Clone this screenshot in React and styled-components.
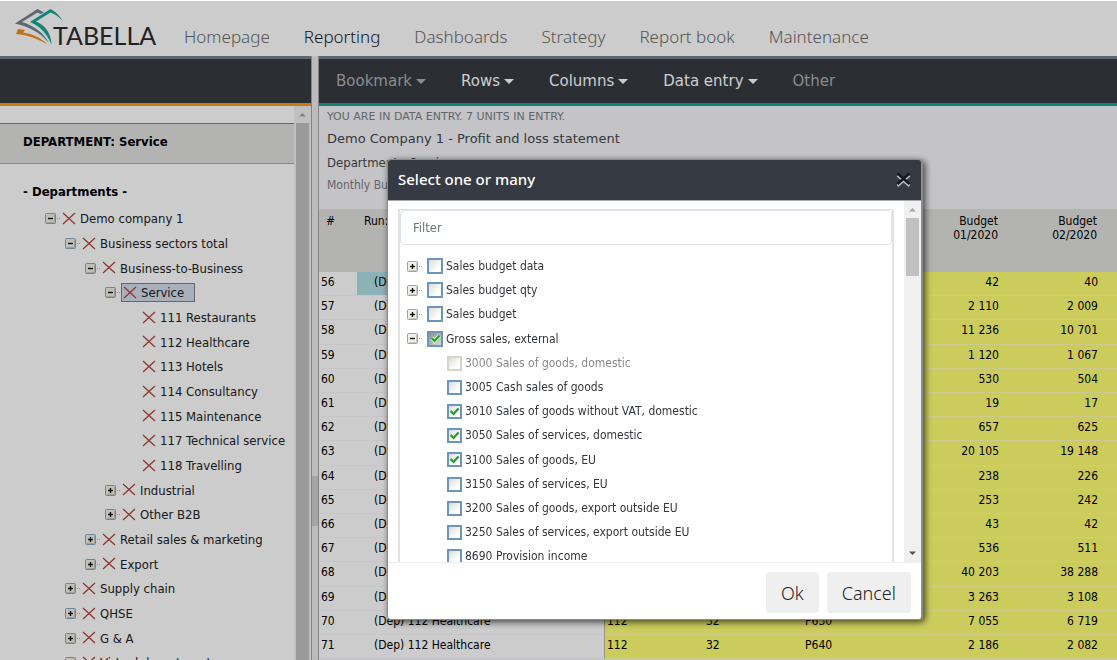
import { useState } from "react";
import styled, { createGlobalStyle } from "styled-components";

const narrow = `"DejaVu Sans Condensed", "Noto Sans", sans-serif`;
const wide = `"DejaVu Sans", sans-serif`;
const noto = `"Noto Sans", sans-serif`;

const navItems = ["Homepage", "Reporting", "Dashboards", "Strategy", "Report book", "Maintenance"];

const menuItems = [
  { name: "Bookmark", caret: true, dim: true },
  { name: "Rows", caret: true },
  { name: "Columns", caret: true },
  { name: "Data entry", caret: true },
  { name: "Other", dim: true },
];

const departments = [
  { name: "Demo company 1", level: 0, open: true },
  { name: "Business sectors total", level: 1, open: true },
  { name: "Business-to-Business", level: 2, open: true },
  { name: "Service", level: 3, open: true, selected: true },
  { name: "111 Restaurants", level: 4, leaf: true },
  { name: "112 Healthcare", level: 4, leaf: true },
  { name: "113 Hotels", level: 4, leaf: true },
  { name: "114 Consultancy", level: 4, leaf: true },
  { name: "115 Maintenance", level: 4, leaf: true },
  { name: "117 Technical service", level: 4, leaf: true },
  { name: "118 Travelling", level: 4, leaf: true },
  { name: "Industrial", level: 3 },
  { name: "Other B2B", level: 3 },
  { name: "Retail sales & marketing", level: 2 },
  { name: "Export", level: 2 },
  { name: "Supply chain", level: 1 },
  { name: "QHSE", level: 1 },
  { name: "G & A", level: 1 },
  { name: "Virtual departments", level: 1 },
];

const budgetRows = [
  [56, "42", "40"],
  [57, "2 110", "2 009"],
  [58, "11 236", "10 701"],
  [59, "1 120", "1 067"],
  [60, "530", "504"],
  [61, "19", "17"],
  [62, "657", "625"],
  [63, "20 105", "19 148"],
  [64, "238", "226"],
  [65, "253", "242"],
  [66, "43", "42"],
  [67, "536", "511"],
  [68, "40 203", "38 288"],
  [69, "3 263", "3 108"],
  [70, "7 055", "6 719", "P630"],
  [71, "2 186", "2 082", "P640"],
];

const accounts = [
  { name: "Sales budget data" },
  { name: "Sales budget qty" },
  { name: "Sales budget" },
  { name: "Gross sales, external", open: true, checked: true },
  { name: "3000 Sales of goods, domestic", child: true, disabled: true },
  { name: "3005 Cash sales of goods", child: true },
  { name: "3010 Sales of goods without VAT, domestic", child: true, checked: true },
  { name: "3050 Sales of services, domestic", child: true, checked: true },
  { name: "3100 Sales of goods, EU", child: true, checked: true },
  { name: "3150 Sales of services, EU", child: true },
  { name: "3200 Sales of goods, export outside EU", child: true },
  { name: "3250 Sales of services, export outside EU", child: true },
  { name: "8690 Provision income", child: true },
];

const Expander = ({ open }) => (
  <ExpandButton type="button" aria-label={open ? "Collapse" : "Expand"}>
    <svg width="17" height="11" viewBox="0 0 17 11">
      <rect x="0.5" y="0.5" width="10" height="10" rx="1" fill="#f1efe9" stroke="#8ba6c2" />
      <path d="M1.5 9.5h8v-8" fill="none" stroke="#c9c6bd" />
      <path d="M3 5.5h5" stroke="#111" strokeWidth="1.4" />
      {!open && <path d="M5.5 3v5" stroke="#111" strokeWidth="1.4" />}
      <path d="M12 5.5h1M14 5.5h1" stroke="#b5b5b5" />
    </svg>
  </ExpandButton>
);

const RedCross = () => (
  <svg width="14" height="14" viewBox="0 0 14 14">
    <path d="M1 1l12 11M13 1L1 12" stroke="#b04038" strokeWidth="1.2" fill="none" />
  </svg>
);

const Scrollbar = ({ thumb, down }) => (
  <Track>
    <svg width="17" height="17" viewBox="0 0 17 17">
      <path d="M5 10.5h7L8.5 7z" fill="#a3a3a3" />
    </svg>
    <Thumb $height={thumb} />
    {down && (
      <svg width="17" height="17" viewBox="0 0 17 17">
        <path d="M5 6.5h7L8.5 10z" fill="#505050" />
      </svg>
    )}
  </Track>
);

const Account = ({ account }) => {
  const [checked, setChecked] = useState(!!account.checked);

  return (
    <AccountRow $child={account.child}>
      {!account.child && <Expander open={account.open} />}
      <AccountLabel $disabled={account.disabled}>
        <Tick $child={account.child}>
          <TickInput
            type="checkbox"
            checked={checked}
            disabled={account.disabled}
            $partial={account.open}
            onChange={(e) => setChecked(e.target.checked)}
          />
          {checked && (
            <svg width="11" height="11" viewBox="0 0 11 11">
              {account.open && <path d="M1.5 5l3 3 5-5.5" fill="none" stroke="#dff3df" strokeWidth="4" />}
              <path d="M1.5 5l3 3 5-5.5" fill="none" stroke="#21a121" strokeWidth="2.2" />
            </svg>
          )}
        </Tick>
        {account.name}
      </AccountLabel>
    </AccountRow>
  );
};

const App = () => {
  const [filter, setFilter] = useState("");

  return (
    <>
      <GlobalStyle />
      <Page>
        <Header>
          <Logo href="#">
            <svg width="50" height="38" viewBox="0 0 50 38">
              <path d="M30 4.5L23.500 1 1 15.500C14 18 27 25 35 35 29 24 20 18 8 14L23.500 4.500l3 1.500z" fill="#76838c" />
              <path d="M4 21l-2 5c12 1 22 5 31 10-6-6-14-10-24-11.500l2-2.500z" fill="#f0901c" />
              <path
                d="M49 13C45 7 41 3 36.500 1L16 14c10 4 17 12 21.500 22.500C37 25 31 17 22 13.500l14.500-9C41 6 45 9 49 13z"
                fill="#14a595"
              />
            </svg>
            <span>TABELLA</span>
          </Logo>
          <Nav>
            {navItems.map((item) => (
              <NavLink href="#" key={item} $active={item === "Reporting"}>
                {item}
              </NavLink>
            ))}
          </Nav>
        </Header>

        <Columns>
          <Sidebar>
            <Bar $line="#fd981a" />
            <SidebarBody>
              <SidebarContent>
                <DepartmentTitle>DEPARTMENT: Service</DepartmentTitle>
                <TreeTitle>- Departments -</TreeTitle>
                <Tree>
                  {departments.map((d) => (
                    <TreeRow key={d.name} $level={d.level} $leaf={d.leaf}>
                      {!d.leaf && <Expander open={d.open} />}
                      <TreeLink href="#" $selected={d.selected}>
                        <RedCross />
                        {d.name}
                      </TreeLink>
                    </TreeRow>
                  ))}
                </Tree>
              </SidebarContent>
              <Scrollbar />
            </SidebarBody>
          </Sidebar>
          <Splitter>
            <Grip />
          </Splitter>

          <Main>
            <Bar $line="#14a595">
              {menuItems.map((m) => (
                <MenuButton type="button" key={m.name} $dim={m.dim}>
                  {m.name}
                  {m.caret && <Caret />}
                </MenuButton>
              ))}
            </Bar>
            <Info>
              <Status>YOU ARE IN DATA ENTRY. 7 UNITS IN ENTRY.</Status>
              <ReportName>Demo Company 1 - Profit and loss statement</ReportName>
              <DepartmentLine>Department - Service</DepartmentLine>
              <BudgetLine>Monthly Budget</BudgetLine>
            </Info>
            <Table>
              <colgroup>
                <col width="38" />
                <col width="248" />
                <col width="99" />
                <col width="99" />
                <col width="99" />
                <col width="99" />
                <col width="99" />
                <col />
              </colgroup>
              <thead>
                <tr>
                  <HeadCell>#</HeadCell>
                  <HeadCell>Run:</HeadCell>
                  <HeadCell />
                  <HeadCell />
                  <HeadCell />
                  <HeadCell $number>Budget<br />01/2020</HeadCell>
                  <HeadCell $number>Budget<br />02/2020</HeadCell>
                  <HeadCell />
                </tr>
              </thead>
              <tbody>
                {budgetRows.map(([no, jan, feb, code], i) => (
                  <Row key={no}>
                    <Cell>{no}</Cell>
                    <NameCell $current={i === 0}>(Dep){code && " 112 Healthcare"}</NameCell>
                    <EntryCell>{code && "112"}</EntryCell>
                    <EntryCell>{code && "32"}</EntryCell>
                    <EntryCell>{code}</EntryCell>
                    <EntryCell $number>{jan}</EntryCell>
                    <EntryCell $number>{feb}</EntryCell>
                    <EntryCell />
                  </Row>
                ))}
              </tbody>
            </Table>
          </Main>
        </Columns>
      </Page>

      <Overlay />
      <Dialog role="dialog" aria-labelledby="dialog-title">
        <DialogHeader>
          <h2 id="dialog-title">Select one or many</h2>
          <CloseButton type="button" aria-label="Close">
            <svg width="15" height="18" viewBox="0 0 15 18">
              <path d="M1.500 5.500l12 10.500M13.500 5.500L1.500 16" stroke="#b9bcc0" strokeWidth="2.500" />
              <path d="M1.500 3.500l12 10.500M13.500 3.500L1.500 14" stroke="#15181c" strokeWidth="2.500" />
            </svg>
          </CloseButton>
        </DialogHeader>
        <DialogBody>
          <ListFrame>
            <FilterInput
              type="text"
              placeholder="Filter"
              aria-label="Filter"
              value={filter}
              onChange={(e) => setFilter(e.target.value)}
            />
            <AccountList>
              {accounts
                .filter((a) => a.name.toLowerCase().includes(filter.toLowerCase()))
                .map((a) => (
                  <Account account={a} key={a.name} />
                ))}
            </AccountList>
          </ListFrame>
          <Scrollbar thumb={58} down />
        </DialogBody>
        <DialogFooter>
          <FooterButton type="button">Ok</FooterButton>
          <FooterButton type="button">Cancel</FooterButton>
        </DialogFooter>
      </Dialog>
    </>
  );
};

const GlobalStyle = createGlobalStyle`
  * {
    box-sizing: border-box;
  }
  body {
    margin: 0;
    overflow: hidden;
    background: #fff;
    font-family: ${narrow};
    font-size: 12px;
  }
  ul, h1, h2, p {
    margin: 0;
    padding: 0;
    list-style: none;
  }
  a {
    color: inherit;
    text-decoration: none;
  }
  button {
    margin: 0;
    padding: 0;
    border: 0;
    background: none;
    color: inherit;
    font: inherit;
    cursor: pointer;
  }
  svg {
    display: block;
    flex: none;
  }
`;

const Page = styled.div`
  display: flex;
  flex-direction: column;
  height: 100vh;
`;

const Header = styled.header`
  display: flex;
  flex: none;
  height: 56px;
  padding-left: 14px;
`;

const Logo = styled.a`
  display: flex;
  width: 170px;
  padding-top: 8px;
  color: #2b2b2b;
  font-family: Lato, sans-serif;
  font-size: 25px;
  line-height: 30px;

  span {
    margin: 12px 0 0 -11px;
  }
`;

const Nav = styled.nav`
  display: flex;
  gap: 34px;
  padding-top: 24px;
  font-family: ${noto};
  font-size: 17px;
  font-weight: 300;
  line-height: 26px;
  white-space: nowrap;
`;

const NavLink = styled.a`
  color: ${(props) => (props.$active ? "#1c2026" : "#6c6c6c")};
`;

const Columns = styled.div`
  display: flex;
  flex: 1;
  min-height: 0;
`;

const Sidebar = styled.aside`
  display: flex;
  flex-direction: column;
  flex: none;
  width: 311px;
`;

const Bar = styled.div`
  display: flex;
  align-items: center;
  flex: none;
  gap: 35px;
  height: 50px;
  padding-left: 17px;
  border-top: 3px solid #76838c;
  border-bottom: 3px solid ${(props) => props.$line};
  background: #363a40;
`;

const SidebarBody = styled.div`
  display: flex;
  flex: 1;
  min-height: 0;
`;

const SidebarContent = styled.div`
  flex: 1;
  padding-top: 17px;
  overflow: hidden;
`;

const DepartmentTitle = styled.h1`
  height: 41px;
  padding-left: 23px;
  border-top: 1px solid #76838c;
  border-bottom: 1px solid #fd981a;
  background: #e0e0de;
  font-family: ${narrow};
  font-size: 13px;
  line-height: 36px;
`;

const TreeTitle = styled.h2`
  padding: 18px 0 4px 23px;
  font-size: 13px;
  line-height: 20px;
`;

const Tree = styled.ul`
  color: #222;
  font-size: 13px;
`;

const TreeRow = styled.li`
  display: flex;
  align-items: center;
  height: 25px;
  padding-left: ${(props) => 45 + props.$level * 20 + (props.$leaf ? 17 : 0)}px;
  white-space: nowrap;

  &:nth-child(3n) {
    height: 24px;
  }
`;

const TreeLink = styled.a`
  display: flex;
  align-items: center;
  gap: 4px;
  height: 19px;
  margin-left: ${(props) => (props.$selected ? -1 : 0)}px;
  padding: 0 10px 0 ${(props) => (props.$selected ? 1 : 0)}px;
  border: ${(props) => (props.$selected ? "1px solid #76838c" : "0")};
  background: ${(props) => (props.$selected ? "#d3dcea" : "none")};
`;

const ExpandButton = styled.button`
  flex: none;
  width: 17px;
`;

const Track = styled.div`
  display: flex;
  flex-direction: column;
  flex: none;
  width: 17px;
  background: #f0f0f0;
`;

const Thumb = styled.div`
  flex: ${(props) => (props.$height ? "none" : 1)};
  height: ${(props) => (props.$height ? props.$height + "px" : "auto")};
  margin: 0 2px ${(props) => (props.$height ? "auto" : "0")};
  background: #c1c1c1;
`;

const Splitter = styled.div`
  display: flex;
  align-items: center;
  flex: none;
  width: 8px;
  border: 1px solid #a5a5a5;
  border-width: 0 1px;
  background: #ebebeb;
`;

const Grip = styled.div`
  width: 6px;
  height: 50px;
  margin-top: 286px;
  background: #cfcfcf;
`;

const Main = styled.main`
  flex: 1;
  min-width: 0;
  background: #f5f6f8;
`;

const MenuButton = styled.button`
  display: flex;
  align-items: center;
  gap: 4px;
  color: ${(props) => (props.$dim ? "#adafb2" : "#fff")};
  font-family: ${wide};
  font-size: 15px;
  white-space: nowrap;
`;

const Caret = styled.span`
  border: 5px solid transparent;
  border-top-color: currentColor;
  border-bottom: 0;
`;

const Info = styled.section`
  height: 103px;
  padding: 2px 0 0 8px;
  color: #43474d;
  white-space: nowrap;
`;

const Status = styled.p`
  color: #7a7f85;
  font-family: ${wide};
  font-size: 11px;
  line-height: 18px;
`;

const ReportName = styled.p`
  font-family: ${wide};
  font-size: 13px;
  line-height: 26px;
`;

const DepartmentLine = styled.p`
  font-size: 13px;
  line-height: 22px;
`;

const BudgetLine = styled.p`
  color: #7a7f85;
  font-size: 12px;
  line-height: 22px;
`;

const Table = styled.table`
  width: 100%;
  table-layout: fixed;
  border-collapse: separate;
  border-spacing: 0;
  background: #fff;
  white-space: nowrap;
`;

const HeadCell = styled.th`
  height: 63px;
  padding: 5px ${(props) => (props.$number ? 3 : 7)}px 0;
  background: #e0e0de;
  font-weight: normal;
  line-height: 14px;
  text-align: ${(props) => (props.$number ? "right" : "left")};
  vertical-align: top;
`;

const Row = styled.tr`
  height: 24px;

  &:nth-child(5n + 3) {
    height: 25px;
  }
`;

const Cell = styled.td`
  padding: 0 2px 4px 2px;
  border-bottom: 1px solid #f8f8f8;
  line-height: 16px;
`;

const NameCell = styled(Cell)`
  padding-left: 17px;
  border-right: 1px solid #b8b8b8;
  background: ${(props) => (props.$current ? "#aee0e4" : "none")};
`;

const EntryCell = styled(Cell)`
  border-bottom-color: #fffcae;
  background: #feff74;
  text-align: ${(props) => (props.$number ? "right" : "left")};
`;

const Overlay = styled.div`
  position: fixed;
  inset: 1px 0 0;
  background: rgba(0, 0, 0, 0.2);
`;

const Dialog = styled.div`
  position: fixed;
  top: 159px;
  left: 387px;
  display: flex;
  flex-direction: column;
  width: 536px;
  height: 461px;
  border: 1px solid #8b8d90;
  border-right-width: 2px;
  border-radius: 4px;
  background: #fff;
  box-shadow: 2px 2px 7px rgba(0, 0, 0, 0.7);
  overflow: hidden;
`;

const DialogHeader = styled.div`
  display: flex;
  align-items: center;
  justify-content: space-between;
  flex: none;
  height: 41px;
  padding: 0 10px 2px;
  border-bottom: 1px solid #a9abae;
  background: #363a42;
  color: #fff;

  h2 {
    font-family: ${noto};
    font-size: 15px;
    font-weight: 500;
  }
`;

const CloseButton = styled.button`
  width: 15px;
`;

const DialogBody = styled.div`
  display: flex;
  flex: 1;
  min-height: 0;
  padding-left: 10px;
  border-bottom: 1px solid #eee;
  overflow: hidden;
`;

const ListFrame = styled.div`
  flex: 1;
  height: 400px;
  margin: 8px 10px 0 0;
  border: 2px solid #e2e2e2;
  border-top-width: 1px;
`;

const FilterInput = styled.input`
  display: block;
  width: 100%;
  height: 35px;
  padding: 0 12px;
  border: 1px solid #dde3e9;
  border-radius: 4px;
  color: #495057;
  font-family: ${narrow};
  font-size: 13px;
  outline: none;

  &::placeholder {
    color: #6c757d;
    opacity: 1;
  }
`;

const AccountList = styled.ul`
  padding-top: 9px;
`;

const AccountRow = styled.li`
  display: flex;
  align-items: center;
  gap: 3px;
  height: 24px;
  padding-left: ${(props) => (props.$child ? 47 : 7)}px;

  &:nth-child(5n + 4) {
    height: 25px;
  }
`;

const AccountLabel = styled.label`
  display: flex;
  align-items: center;
  gap: 3px;
  color: ${(props) => (props.$disabled ? "#8b8b8b" : "#33373c")};
  white-space: nowrap;
`;

const Tick = styled.span`
  display: grid;
  place-items: center;
  width: ${(props) => (props.$child ? 15 : 16)}px;
  height: ${(props) => (props.$child ? 15 : 16)}px;

  > * {
    grid-area: 1 / 1;
  }
  svg {
    pointer-events: none;
  }
`;

const TickInput = styled.input`
  appearance: none;
  width: 100%;
  height: 100%;
  margin: 0;
  border: 2px solid #6d96bf;
  background: ${(props) =>
    props.$partial ? "linear-gradient(135deg, #8d8d86, #d8d8d4)" : "linear-gradient(135deg, #dcdcd7, #fff 75%)"};

  &:disabled {
    border-color: #d5d5cb;
  }
`;

const DialogFooter = styled.div`
  display: flex;
  justify-content: flex-end;
  flex: none;
  gap: 8px;
  height: 56px;
  padding: 9px 10px;
`;

const FooterButton = styled.button`
  height: 41px;
  padding: 0 15px;
  border-radius: 4px;
  background: #efefef;
  color: #222;
  font-family: ${noto};
  font-size: 18px;
  font-weight: 300;
`;

export default App;
